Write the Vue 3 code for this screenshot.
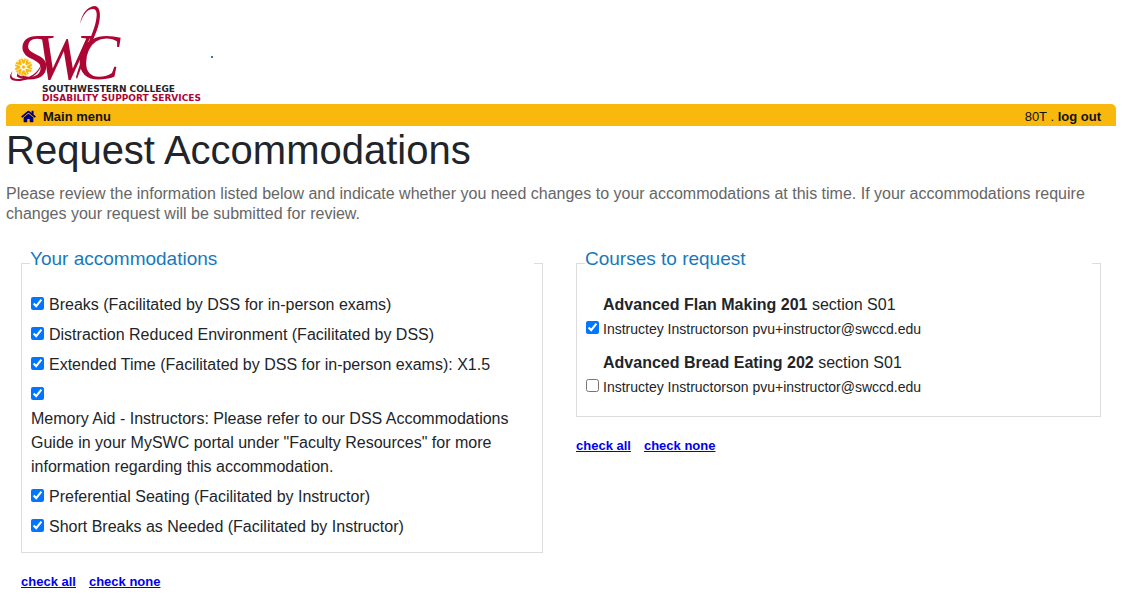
<template>
  <div class="page">
    <header class="brand">
      <svg class="logo" width="200" height="104" viewBox="6 0 200 104" role="img" aria-label="Southwestern College Disability Support Services">
        <text class="monogram" x="16 34 76" y="79">SWC</text>
        <g class="swash">
          <path d="M80 24C82 12 89 6 95 6C101 7 101 17 98 27C95 37 86 54 77 79L76 77C82 55 91 39 95 25C98 14 97 9 93 9C87 9 83 15 80 24Z" />
          <path d="M13 71C10 75 11 79 18 79C29 79 39 73 42 62C41 72 31 81 18 81C9 81 8 76 13 71Z" />
        </g>
        <g class="sun" transform="translate(23.5 67)">
          <path
            v-for="angle in rays"
            :key="angle"
            :transform="`rotate(${angle})`"
            d="M-1 -3L-4 -8L-1 -9L0 -7L1 -9L4 -8L1 -3Z"
          />
          <circle r="2" />
        </g>
        <text class="college" x="42" y="92">SOUTHWESTERN COLLEGE</text>
        <text class="department" x="42" y="101">DISABILITY SUPPORT SERVICES</text>
      </svg>
      <span class="dot"></span>
    </header>

    <nav class="bar">
      <a href="#" class="home">
        <svg width="15" height="13" viewBox="0 0 576 512" aria-hidden="true">
          <path d="M280 148L96 300V464Q96 480 112 480L224 479Q240 479 240 463V368Q240 352 256 352H320Q336 352 336 368V463Q336 480 352 480H464Q480 480 480 464V300L296 148Q288 142 280 148ZM572 251L488 182V44Q488 32 476 32H420Q408 32 408 44V117L318 43Q288 18 258 43L4 251Q-4 259 3 268L28 299Q36 308 45 301L280 107Q288 101 296 107L531 301Q540 308 548 299L573 268Q580 259 572 251Z" />
        </svg>
        <span>Main menu</span>
      </a>
      <div>80T . <a href="#">log out</a></div>
    </nav>

    <main>
      <h1>Request Accommodations</h1>
      <p class="intro">
        Please review the information listed below and indicate whether you need changes to your
        accommodations at this time. If your accommodations require changes your request will be
        submitted for review.
      </p>

      <div class="columns">
        <section>
          <fieldset class="accommodations">
            <legend>Your accommodations</legend>
            <div v-for="item in accommodations" :key="item.id" class="option">
              <input :id="item.id" v-model="item.checked" type="checkbox" />
              <label :for="item.id" :class="{ long: item.long }">{{ item.label }}</label>
            </div>
          </fieldset>
          <div class="links">
            <a href="#" @click.prevent="setAll(accommodations, true)">check all</a>
            <a href="#" @click.prevent="setAll(accommodations, false)">check none</a>
          </div>
        </section>

        <section>
          <fieldset>
            <legend>Courses to request</legend>
            <div v-for="course in courses" :key="course.id" class="course">
              <input :id="course.id" v-model="course.checked" type="checkbox" />
              <label :for="course.id">
                <span class="title"><strong>{{ course.name }}</strong> section {{ course.section }}</span>
                <span class="instructor">{{ course.instructor }}</span>
              </label>
            </div>
          </fieldset>
          <div class="links">
            <a href="#" @click.prevent="setAll(courses, true)">check all</a>
            <a href="#" @click.prevent="setAll(courses, false)">check none</a>
          </div>
        </section>
      </div>
    </main>
  </div>
</template>

<script setup>
import { ref } from 'vue'

const rays = [0, 45, 90, 135, 180, 225, 270, 315]

const accommodations = ref([
  { id: 'breaks', label: 'Breaks (Facilitated by DSS for in-person exams)', checked: true },
  { id: 'environment', label: 'Distraction Reduced Environment (Facilitated by DSS)', checked: true },
  { id: 'time', label: 'Extended Time (Facilitated by DSS for in-person exams): X1.5', checked: true },
  {
    id: 'memory',
    label:
      'Memory Aid - Instructors: Please refer to our DSS Accommodations Guide in your MySWC portal under "Faculty Resources" for more information regarding this accommodation.',
    checked: true,
    long: true
  },
  { id: 'seating', label: 'Preferential Seating (Facilitated by Instructor)', checked: true },
  { id: 'short-breaks', label: 'Short Breaks as Needed (Facilitated by Instructor)', checked: true }
])

const courses = ref([
  {
    id: 'course-201',
    name: 'Advanced Flan Making 201',
    section: 'S01',
    instructor: 'Instructey Instructorson pvu+instructor@swccd.edu',
    checked: true
  },
  {
    id: 'course-202',
    name: 'Advanced Bread Eating 202',
    section: 'S01',
    instructor: 'Instructey Instructorson pvu+instructor@swccd.edu',
    checked: false
  }
])

const setAll = (list, value) => {
  list.forEach((item) => {
    item.checked = value
  })
}
</script>

<style>
body {
  background: #fff;
}
</style>

<style scoped>
.page {
  padding: 0 6px;
  font-family: 'Liberation Sans', Arial, sans-serif;
  font-size: 16px;
  line-height: 24px;
  color: #212529;
}

.brand {
  display: flex;
  align-items: center;
  gap: 5px;
  height: 104px;
}

.logo {
  display: block;
}

.monogram {
  font-family: 'Liberation Serif', serif;
  font-size: 66px;
  font-style: italic;
  fill: #ac0634;
}

.swash {
  fill: #ac0634;
}

.sun {
  fill: #f8b90c;
  stroke: #fff;
  stroke-width: 0.6;
}

.college,
.department {
  font-family: 'DejaVu Sans', sans-serif;
  font-size: 9px;
  font-weight: 700;
  fill: #25232a;
}

.department {
  fill: #ac0634;
}

.dot {
  width: 2px;
  height: 2px;
  margin-top: 10px;
  background: #337ab7;
}

.bar {
  display: flex;
  justify-content: space-between;
  padding: 2px 15px 0;
  border-radius: 5px 5px 0 0;
  background: #f8b90c;
  font-size: 13px;
  line-height: 20px;
  color: #111;
}

.bar div {
  padding-top: 1px;
  line-height: 19px;
}

.bar a {
  color: #111;
  font-weight: 700;
  text-decoration: none;
}

.home {
  display: flex;
  align-items: center;
  gap: 7px;
  padding-top: 1px;
  line-height: 19px;
}

.home svg {
  fill: #000080;
}

h1 {
  margin: 0;
  font-size: 40px;
  font-weight: 400;
  line-height: 49px;
}

.intro {
  margin: 9px 0 23px;
  line-height: 20px;
  color: #666;
}

.columns {
  display: grid;
  grid-template-columns: 1fr 1fr;
}

section {
  padding: 0 15px;
}

fieldset {
  min-width: 0;
  margin: 0;
  padding: 0 8px 7px;
  border: 1px solid #ddd;
}

.accommodations {
  margin-right: 3px;
}

legend {
  box-sizing: border-box;
  width: 100%;
  margin-bottom: 14px;
  padding: 0 0 8px;
  font-size: 19px;
  line-height: 24px;
  color: #1779ba;
}

input {
  width: 13px;
  height: 13px;
  margin: 0;
}

.option {
  display: flex;
  flex-wrap: wrap;
  column-gap: 5px;
  margin: 0 1px 6px;
}

.option input {
  margin: 4px 0 7px;
}

.long {
  flex-basis: 100%;
}

.course {
  display: flex;
  align-items: flex-end;
  gap: 4px;
  margin: 0 1px 10px;
}

.course input {
  margin-bottom: 7px;
}

.title,
.instructor {
  display: block;
}

.instructor {
  font-size: 14px;
}

.links {
  display: flex;
  gap: 13px;
  margin-top: 18px;
  font-size: 13px;
  font-weight: 700;
  line-height: 22px;
}

.links a {
  color: #0000ee;
}
</style>
